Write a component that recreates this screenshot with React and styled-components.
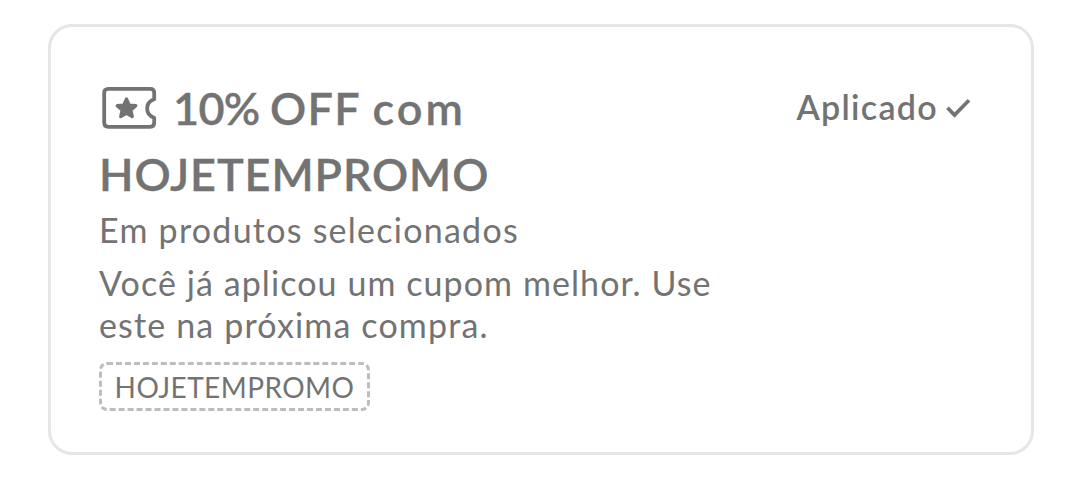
import React from "react";
import styled, { createGlobalStyle } from "styled-components";

const GlobalStyle = createGlobalStyle`
  * { box-sizing: border-box; }
  body {
    margin: 0;
    background: #fff;
    color: #737373;
    font-family: Lato, "Open Sans", sans-serif;
  }
`;

const Page = styled.main`
  height: 500px;
  padding: 24px 48px 45px;
`;

const Card = styled.section`
  display: flex;
  justify-content: space-between;
  align-items: flex-start;
  height: 431px;
  padding: 48px 59px 0 48px;
  border: 3px solid #e6e6e6;
  border-radius: 24px;
`;

const Details = styled.div`
  display: flex;
  flex-direction: column;
  align-items: flex-start;
`;

const Line = styled.span`
  display: block;
  white-space: nowrap;
  letter-spacing: ${(p) => p.$tracking || 0}px;
`;

const Word = styled.span`
  letter-spacing: ${(p) => p.$tracking || 0}px;
`;

const Title = styled.h2`
  margin: 0;
  font-size: 45px;
  line-height: 66px;
  font-weight: 600;
  -webkit-text-stroke: 0.35px currentColor;
`;

const TitleRow = styled.div`
  display: flex;
  align-items: center;
`;

const TicketIcon = styled.svg`
  flex: none;
  width: 60px;
  height: 46px;
  margin: 0 13px 0 1px;
`;

const Subtitle = styled.p`
  margin: 2px 0 0;
  font-size: 34px;
  line-height: 42px;
`;

const Message = styled.p`
  margin: 11px 0 0;
  font-size: 34px;
  line-height: 42px;
`;

const CodeTag = styled.div`
  display: flex;
  align-items: center;
  justify-content: center;
  width: 271px;
  height: 49px;
  margin-top: 16px;
  border: 3px dashed #bdbdbd;
  border-radius: 8px;
  font-size: 28px;
`;

const Status = styled.div`
  display: flex;
  align-items: center;
  margin-top: 11px;
  font-size: 34px;
  line-height: 42px;
  font-weight: 600;
`;

const CheckIcon = styled.svg`
  width: 27px;
  height: 20px;
  margin: 1px 0 0 7px;
`;

export default function App() {
  return (
    <>
      <GlobalStyle />
      <Page>
        <Card>
          <Details>
            <Title>
              <TitleRow>
                <TicketIcon viewBox="0 0 60 46" fill="none">
                  <path
                    d="M8.2 3.8H50.2Q54.2 3.8 54.2 7.8V14.2C44.8 17.4 44.8 29.6 54.2 32.8V37.8Q54.2 41.8 50.2 41.8H8.2Q4.2 41.8 4.2 37.8V7.8Q4.2 3.8 8.2 3.8Z"
                    stroke="#737373"
                    strokeWidth="3.8"
                    strokeLinejoin="round"
                  />
                  <path
                    d="M26.5 14L29.2 20L35.8 20.7L30.9 25.1L32.3 31.6L26.5 28.3L20.7 31.6L22.1 25.1L17.2 20.7L23.8 20Z"
                    fill="#737373"
                    stroke="#737373"
                    strokeWidth="3.2"
                    strokeLinejoin="round"
                  />
                </TicketIcon>
                <Line>
                  <Word $tracking={-0.7}>10% </Word>
                  <Word $tracking={1.3}>OFF </Word>
                  <Word $tracking={3}>com</Word>
                </Line>
              </TitleRow>
              <Line $tracking={0.9}>HOJETEMPROMO</Line>
            </Title>
            <Subtitle>
              <Line $tracking={1.25}>Em produtos selecionados</Line>
            </Subtitle>
            <Message>
              <Line $tracking={1.08}>Você já aplicou um cupom melhor. Use</Line>
              <Line $tracking={1.15}>este na próxima compra.</Line>
            </Message>
            <CodeTag>
              <Line $tracking={0.45}>HOJETEMPROMO</Line>
            </CodeTag>
          </Details>
          <Status>
            <Line $tracking={1.3}>Aplicado</Line>
            <CheckIcon viewBox="0 0 27 20" fill="none">
              <path d="M2.5 9.8L9.5 17L24 2.2" stroke="#737373" strokeWidth="3.7" />
            </CheckIcon>
          </Status>
        </Card>
      </Page>
    </>
  );
}
